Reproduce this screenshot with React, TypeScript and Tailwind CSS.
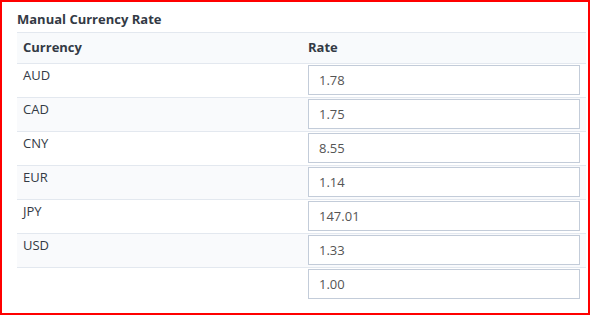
import React from "react";

const rates = [
  { code: "AUD", rate: "1.78" },
  { code: "CAD", rate: "1.75" },
  { code: "CNY", rate: "8.55" },
  { code: "EUR", rate: "1.14" },
  { code: "JPY", rate: "147.01" },
  { code: "USD", rate: "1.33" },
  { code: "", rate: "1.00" },
];

export default function App() {
  return (
    <div
      className="w-[590px] h-[315px] border-2 border-[#ff0000] bg-white text-[13px] text-[#333a45]"
      style={{ fontFamily: '"Open Sans", "Liberation Sans", sans-serif' }}
    >
      <div className="pl-[15px] pr-[2px]">
        <h2 className="font-bold text-[13px] leading-[18px] pt-[8px] pb-[4px] text-[#333a45]">
          Manual Currency Rate
        </h2>
        <table className="w-[569px] border-collapse">
          <thead>
            <tr className="bg-[#f8fafc] border-t border-b border-[#e3e8ef]">
              <th className="w-[285px] text-left font-bold px-[6px] h-[31px]">Currency</th>
              <th className="text-left font-bold px-[6px] h-[31px]">Rate</th>
            </tr>
          </thead>
          <tbody>
            {rates.map((r, i) => (
              <tr
                key={i}
                className={
                  (i % 2 === 1 ? "bg-[#f9fafc] " : "") +
                  (i < rates.length - 1 ? "border-b border-[#e3e8ef]" : "")
                }
              >
                <td className="align-top px-[6px] pt-[2px] leading-[18px]">{r.code}</td>
                <td className="px-[6px] pt-[1px] pb-[2px]">
                  <input
                    readOnly
                    value={r.rate}
                    className="block w-full h-[30px] border border-[#c3ccd9] bg-white px-[10px] text-[13px] text-[#555] outline-none"
                  />
                </td>
              </tr>
            ))}
          </tbody>
        </table>
      </div>
    </div>
  );
}
